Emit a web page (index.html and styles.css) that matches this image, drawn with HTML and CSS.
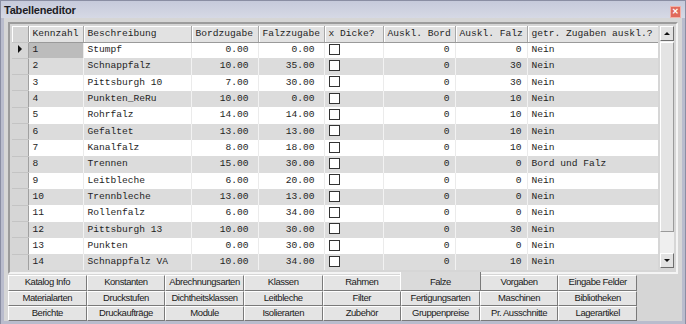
FILE: index.html
```html
<!DOCTYPE html>
<html lang="de">
<head>
    <meta charset="UTF-8">
    <title>Tabelleneditor</title>
    <link rel="stylesheet" href="styles.css">
</head>
<body>
    <div class="window">
        <div class="titlebar">
            <span class="title">Tabelleneditor</span>
            <span class="close">&#x2715;</span>
        </div>

        <div class="body">
            <div class="grid-frame">
                <div class="grid-clip">
                    <table class="grid">
                        <colgroup>
                            <col style="width:16px"><col style="width:55px"><col style="width:108px">
                            <col style="width:67px"><col style="width:66px"><col style="width:59px">
                            <col style="width:72px"><col style="width:72px"><col style="width:131px">
                        </colgroup>
                        <thead>
                            <tr>
                                <th class="rh"></th>
                                <th>Kennzahl</th>
                                <th>Beschreibung</th>
                                <th>Bordzugabe</th>
                                <th>Falzzugabe</th>
                                <th>x Dicke?</th>
                                <th>Auskl. Bord</th>
                                <th>Auskl. Falz</th>
                                <th>getr. Zugaben auskl.?</th>
                            </tr>
                        </thead>
                        <tbody id="rows"></tbody>
                    </table>
                </div>
                <div class="vscroll">
                    <div class="sb-btn"><span class="arrow-up"></span></div>
                    <div class="sb-track"><div class="sb-thumb"></div></div>
                    <div class="sb-btn"><span class="arrow-down"></span></div>
                </div>
            </div>

            <div class="tabs">
                <div class="tab">Katalog Info</div>
                <div class="tab">Konstanten</div>
                <div class="tab">Abrechnungsarten</div>
                <div class="tab">Klassen</div>
                <div class="tab">Rahmen</div>
                <div class="tab active">Falze</div>
                <div class="tab">Vorgaben</div>
                <div class="tab">Eingabe Felder</div>

                <div class="tab">Materialarten</div>
                <div class="tab">Druckstufen</div>
                <div class="tab">Dichtheitsklassen</div>
                <div class="tab">Leitbleche</div>
                <div class="tab">Filter</div>
                <div class="tab">Fertigungsarten</div>
                <div class="tab">Maschinen</div>
                <div class="tab">Bibliotheken</div>

                <div class="tab">Berichte</div>
                <div class="tab">Druckaufträge</div>
                <div class="tab">Module</div>
                <div class="tab">Isolierarten</div>
                <div class="tab">Zubehör</div>
                <div class="tab">Gruppenpreise</div>
                <div class="tab">Pr. Ausschnitte</div>
                <div class="tab">Lagerartikel</div>
            </div>
        </div>
    </div>

    <script>
        // Falze table rows
        const falze = [
            [1, 'Stumpf', '0.00', '0.00', 0, 0, 'Nein'],
            [2, 'Schnappfalz', '10.00', '35.00', 0, 30, 'Nein'],
            [3, 'Pittsburgh 10', '7.00', '30.00', 0, 30, 'Nein'],
            [4, 'Punkten_ReRu', '10.00', '0.00', 0, 10, 'Nein'],
            [5, 'Rohrfalz', '14.00', '14.00', 0, 10, 'Nein'],
            [6, 'Gefaltet', '13.00', '13.00', 0, 10, 'Nein'],
            [7, 'Kanalfalz', '8.00', '18.00', 0, 10, 'Nein'],
            [8, 'Trennen', '15.00', '30.00', 0, 0, 'Bord und Falz'],
            [9, 'Leitbleche', '6.00', '20.00', 0, 0, 'Nein'],
            [10, 'Trennbleche', '13.00', '13.00', 0, 0, 'Nein'],
            [11, 'Rollenfalz', '6.00', '34.00', 0, 0, 'Nein'],
            [12, 'Pittsburgh 13', '10.00', '30.00', 0, 30, 'Nein'],
            [13, 'Punkten', '0.00', '30.00', 0, 0, 'Nein'],
            [14, 'Schnappfalz VA', '10.00', '34.00', 0, 10, 'Nein']
        ];

        const tbody = document.getElementById('rows');
        tbody.innerHTML = falze.map((r, i) => `
            <tr>
                <td class="rh">${i === 0 ? '<span class="current"></span>' : ''}</td>
                <td class="${i === 0 ? 'selected' : ''}">${r[0]}</td>
                <td>${r[1]}</td>
                <td class="dec">${r[2]}</td>
                <td class="dec">${r[3]}</td>
                <td><span class="check"></span></td>
                <td class="num">${r[4]}</td>
                <td class="num">${r[5]}</td>
                <td>${r[6]}</td>
            </tr>
        `).join('');
    </script>
</body>
</html>
```

FILE: styles.css
```css
body {
    margin: 0;
    background: #ffffff;
    font-family: "Liberation Sans", Arial, sans-serif;
}
.window {
    width: 686px;
    height: 324px;
    box-sizing: border-box;
    border: 1px solid #8a8ea3;
    background: #d6d6d6;
    display: flex;
    flex-direction: column;
}
.titlebar {
    height: 17px;
    flex-shrink: 0;
    display: flex;
    align-items: center;
    justify-content: space-between;
    padding: 0 4px 0 3px;
    background: linear-gradient(#c6cadb, #d6d9e5);
}
.title {
    font-size: 11px;
    font-weight: bold;
    color: #1c1c24;
    letter-spacing: -0.2px;
}
.close {
    width: 11px;
    height: 12px;
    margin-top: 5px;
    background: #e06a5c;
    border: 1px solid #f2b0a8;
    box-sizing: border-box;
    color: #ffffff;
    font-size: 8px;
    line-height: 10px;
    text-align: center;
    font-weight: bold;
}
.body {
    flex: 1;
    border: 3px solid #b9bccd;
    border-top: 0;
    padding: 4px 4px 0 4px;
    display: flex;
    flex-direction: column;
}
.grid-frame {
    height: 244px;
    border: 2px solid;
    border-color: #9c9c9c #f4f4f4 #f4f4f4 #9c9c9c;
    padding: 2px;
    display: flex;
    gap: 2px;
    background: #d6d6d6;
}
.grid-clip {
    width: 646px;
    height: 244px;
    overflow: hidden;
    background: #d9d9d9;
}
.grid {
    table-layout: fixed;
    width: 646px;
    border-collapse: collapse;
    font-family: "Liberation Mono", "Courier New", monospace;
    font-size: 9.6px;
    line-height: 12px;
    color: #1e1e1e;
}
.grid thead tr {
    height: 16px;
}
.grid tbody tr {
    height: 16.33px;
}
.grid th {
    padding: 0 0 0 4px;
    text-align: left;
    font-weight: normal;
    white-space: nowrap;
    background: #e2e2e2;
    border-right: 1px solid #a8a8a8;
    border-bottom: 1px solid #9a9a9a;
    box-shadow: inset 1px 1px 0 #ffffff;
}
.grid td {
    padding: 0 0 0 4px;
    white-space: nowrap;
    overflow: hidden;
    border-right: 1px solid #ebebeb;
    background: #ffffff;
}
.grid tbody tr:nth-child(even) td {
    background: #dcdcdc;
    border-right-color: #f2f2f2;
}
.grid .rh,
.grid tbody tr:nth-child(even) td.rh {
    background: #d6d6d6;
    border-right: 1px solid #a0a0a0;
    border-bottom: 1px solid #c4c4c4;
    padding: 0;
    text-align: center;
}
.grid td.selected {
    background: #bcbcbc;
}
.grid td.dec {
    text-align: right;
    padding: 0 9px 0 0;
}
.grid td.num {
    text-align: right;
    padding: 0 5px 0 0;
}
.current {
    display: inline-block;
    width: 0;
    height: 0;
    border-top: 4px solid transparent;
    border-bottom: 4px solid transparent;
    border-left: 4px solid #111111;
    vertical-align: -1px;
}
.check {
    display: inline-block;
    width: 11px;
    height: 11px;
    box-sizing: border-box;
    border: 1px solid #333333;
    background: #ffffff;
    vertical-align: -2px;
}
.vscroll {
    width: 14px;
    height: 242px;
    display: flex;
    flex-direction: column;
    background: #ededed;
}
.sb-btn {
    height: 15px;
    box-sizing: border-box;
    border: 1px solid;
    border-color: #ffffff #6e6e6e #6e6e6e #ffffff;
    background: #e2e2e2;
    display: flex;
    align-items: center;
    justify-content: center;
}
.sb-track {
    flex: 1;
    background: #efefef;
    padding: 1px 0;
}
.sb-thumb {
    height: 190px;
    box-sizing: border-box;
    border: 1px solid;
    border-color: #ffffff #9a9a9a #9a9a9a #ffffff;
    background: #e4e4e4;
}
.arrow-up,
.arrow-down {
    width: 0;
    height: 0;
    border-left: 3px solid transparent;
    border-right: 3px solid transparent;
}
.arrow-up {
    border-bottom: 3px solid #111111;
}
.arrow-down {
    border-top: 3px solid #111111;
}
.tabs {
    width: 629px;
    margin-top: 1px;
    display: grid;
    grid-template-columns: repeat(8, 1fr);
    grid-template-rows: 16px 15px 15px;
}
.tab {
    box-sizing: border-box;
    border: 1px solid;
    border-color: #ffffff #7a7a7a #7a7a7a #ffffff;
    background: #e4e4e4;
    font-size: 9.5px;
    letter-spacing: -0.45px;
    color: #1a1a1a;
    text-align: center;
    line-height: 12px;
    white-space: nowrap;
    overflow: hidden;
}
.tab.active {
    margin: -3px -1px 0 -1px;
    border-top: 0;
    background: #dadada;
    line-height: 20px;
    position: relative;
}
```
